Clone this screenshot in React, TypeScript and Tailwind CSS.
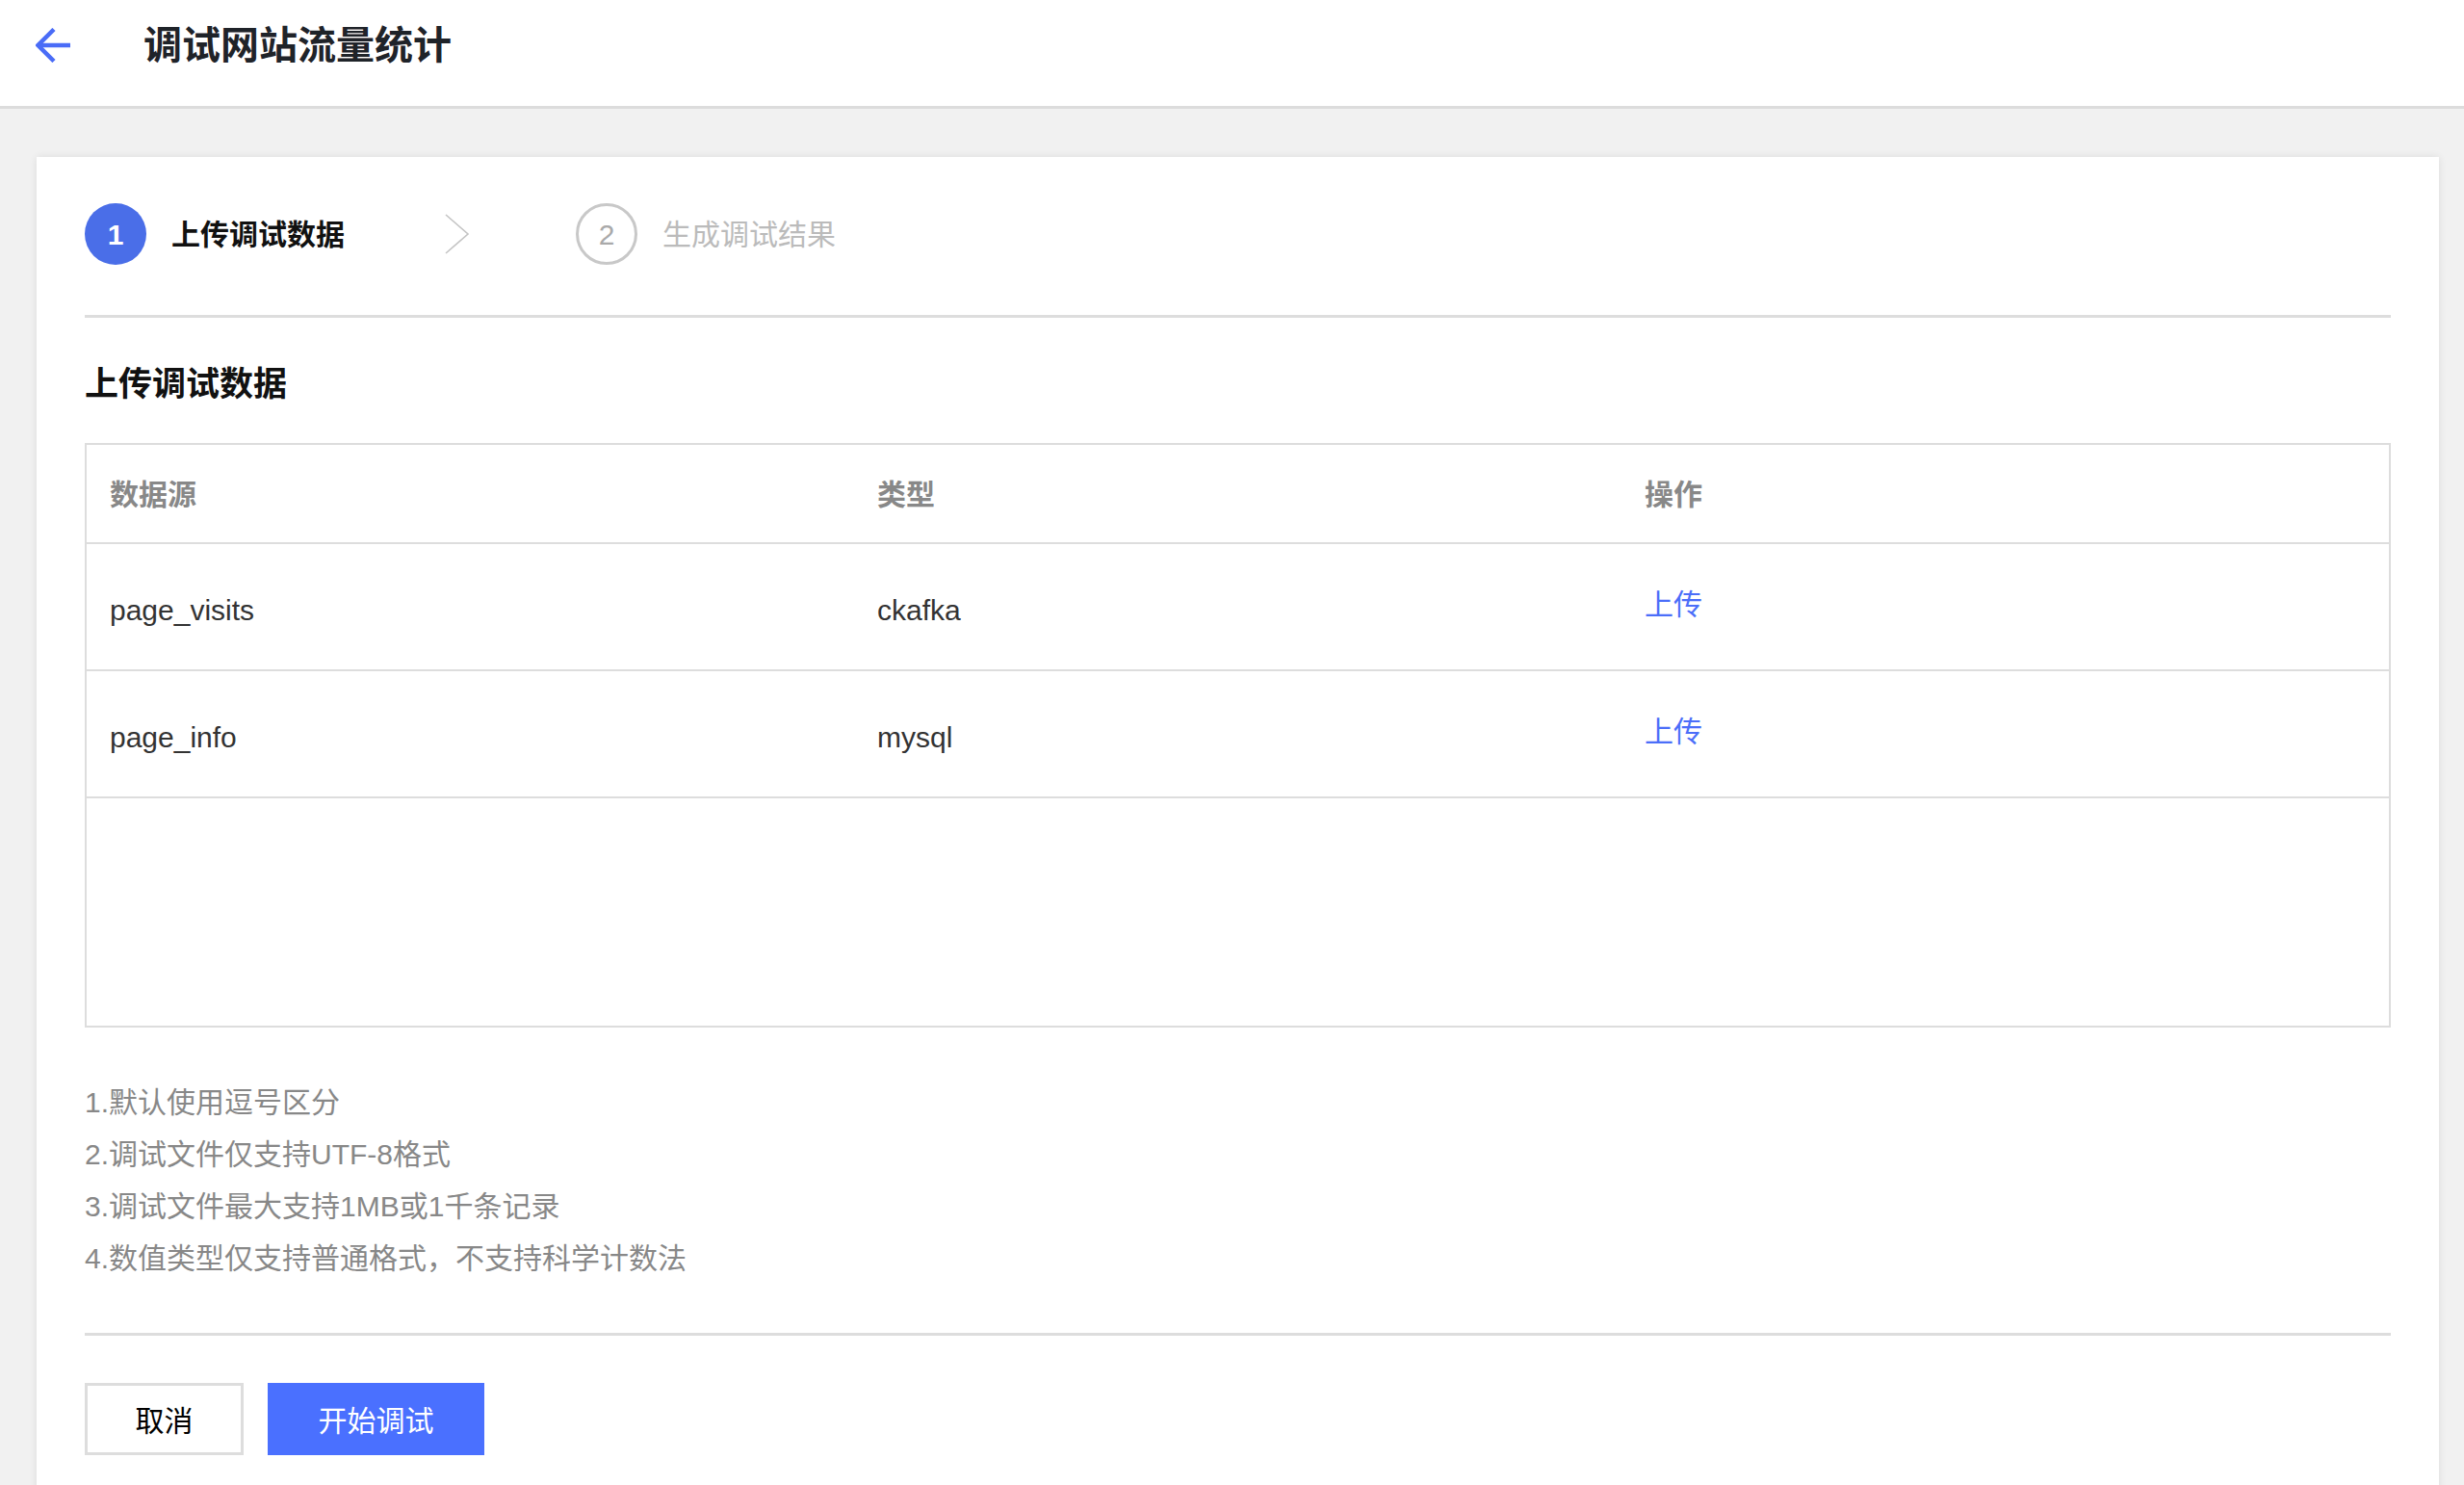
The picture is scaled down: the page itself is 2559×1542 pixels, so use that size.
const rows = [
  { name: "page_visits", type: "ckafka" },
  { name: "page_info", type: "mysql" },
];

const notes = [
  "1.默认使用逗号区分",
  "2.调试文件仅支持UTF-8格式",
  "3.调试文件最大支持1MB或1千条记录",
  "4.数值类型仅支持普通格式，不支持科学计数法",
];

export default function App() {
  return (
    <div className="h-screen overflow-hidden bg-[#f1f1f1] font-['Liberation_Sans','Noto_Sans_CJK_SC',sans-serif]">
      <header className="flex h-[113px] items-center border-b-[3px] border-[#dcdcdc] bg-white pb-[16px] pl-[37px]">
        <svg width="37" height="36" viewBox="0 0 37 36" fill="none" stroke="#4a6cf7" strokeWidth="4.5">
          <path d="M2 18 H36" />
          <path d="M19 1.5 L2.5 18 L19 34.5" />
        </svg>
        <h1 className="ml-[75px] text-[40px] font-bold leading-none text-[#1f2329]">调试网站流量统计</h1>
      </header>

      <main className="pl-[38px] pr-[26px] pt-[50px]">
        <div className="bg-white px-[50px] pb-[50px] pt-[48px] shadow-[0_0_8px_rgba(0,0,0,0.09)]">
          {/* 步骤条 */}
          <div className="flex h-[64px] items-center">
            <div className="flex h-[64px] w-[64px] items-center justify-center rounded-full bg-[#4a6ee8] text-[30px] font-bold text-white">1</div>
            <span className="ml-[26px] text-[30px] font-bold text-[#111]">上传调试数据</span>
            <svg className="ml-[104px]" width="26" height="42" viewBox="0 0 26 42" fill="none" stroke="#c4c4c4" strokeWidth="1.6">
              <path d="M1 1 L24 21 L1 41" />
            </svg>
            <div className="ml-[110px] flex h-[64px] w-[64px] items-center justify-center rounded-full border-[3px] border-[#c8c8c8] text-[30px] text-[#aaa]">2</div>
            <span className="ml-[26px] text-[30px] text-[#bbb]">生成调试结果</span>
          </div>

          <div className="mt-[52px] h-[3px] bg-[#dddddd]" />

          <h2 className="mt-[48px] text-[35px] font-bold leading-[41px] text-[#111]">上传调试数据</h2>

          {/* 数据源表格 */}
          <div className="mt-[41px] border-2 border-[#dddddd]">
            <div className="grid h-[103px] grid-cols-3 items-center border-b-2 border-[#dddddd] pt-[2px] text-[30px] font-bold text-[#888]">
              <div className="pl-[24px]">数据源</div>
              <div className="pl-[24px]">类型</div>
              <div className="pl-[24px]">操作</div>
            </div>
            {rows.map((r) => (
              <div key={r.name} className="grid h-[132px] grid-cols-3 items-center border-b-2 border-[#dddddd] text-[30px] text-[#333]">
                <div className="pl-[24px] pt-[6px]">{r.name}</div>
                <div className="pl-[24px] pt-[6px]">{r.type}</div>
                <div className="pl-[24px] pb-[6px]">
                  <button className="text-[#4b6ef9]">上传</button>
                </div>
              </div>
            ))}
            <div className="h-[236px]" />
          </div>

          <div className="mt-[51px] text-[30px] leading-[54px] text-[#888]">
            {notes.map((n) => (
              <div key={n}>{n}</div>
            ))}
          </div>

          <div className="mt-[50px] h-[3px] bg-[#dddddd]" />

          <div className="mt-[49px] flex">
            <button className="h-[75px] w-[165px] border-[3px] border-[#dddddd] bg-white pt-[4px] text-[30px] text-black">取消</button>
            <button className="ml-[25px] h-[75px] w-[225px] bg-[#4a70ff] pt-[4px] text-[30px] text-white">开始调试</button>
          </div>
        </div>
      </main>
    </div>
  );
}
